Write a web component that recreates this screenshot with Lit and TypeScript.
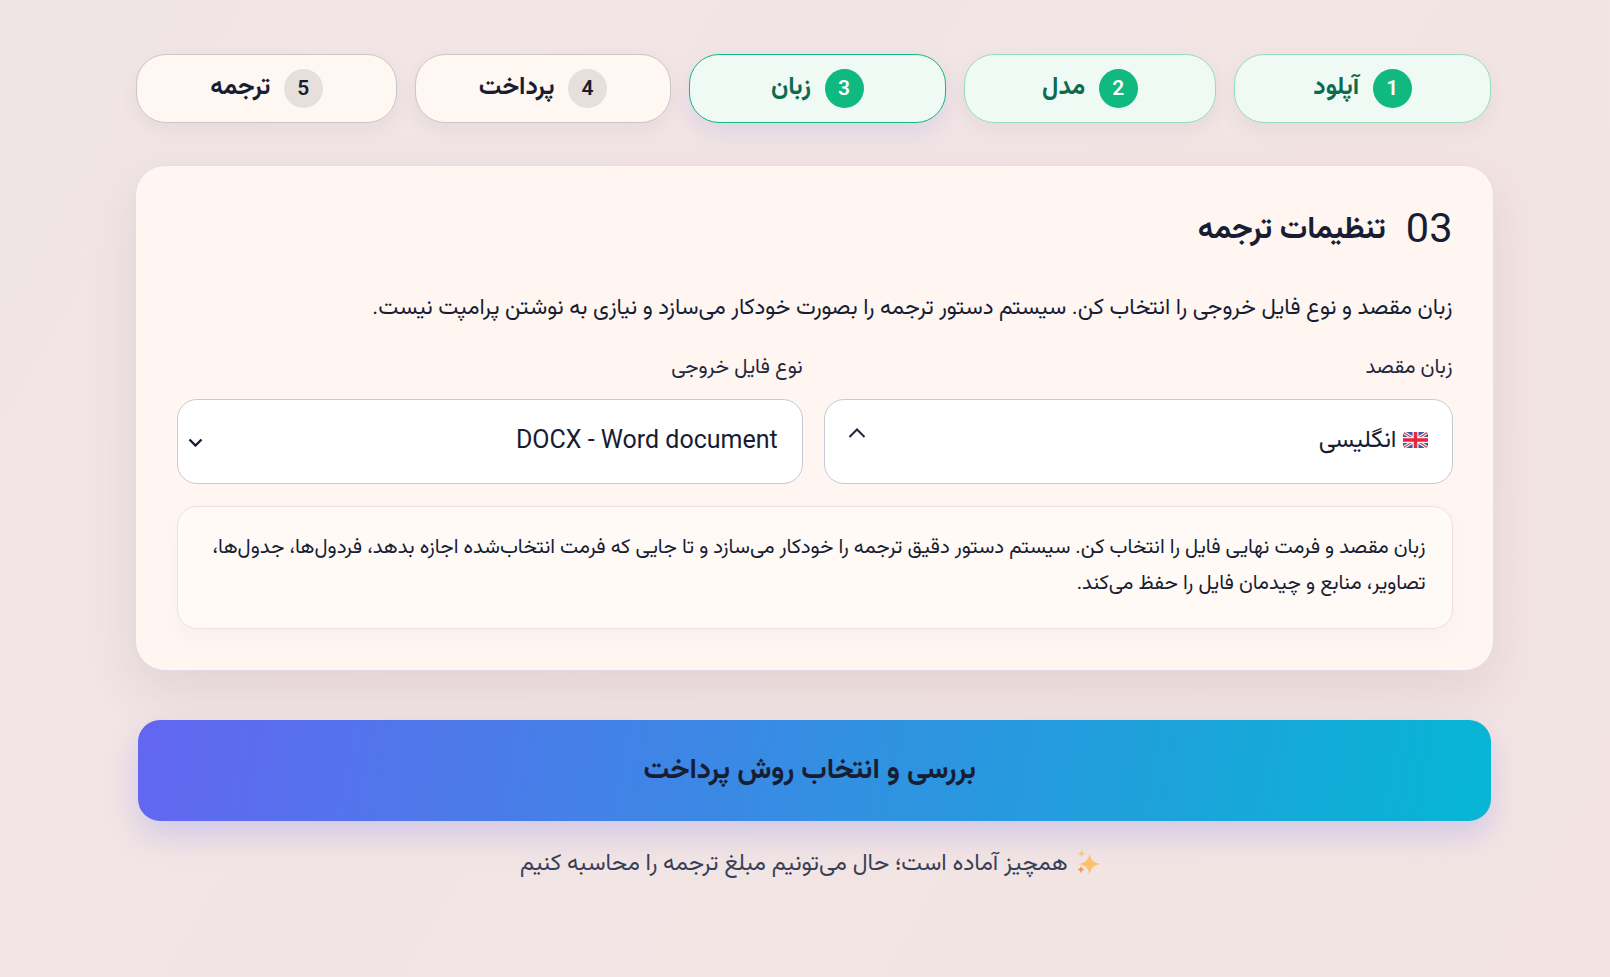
import { LitElement, html, css, svg } from "lit";
import { customElement } from "lit/decorators.js";

const steps = [
  { n: "1", label: "آپلود", state: "done" },
  { n: "2", label: "مدل", state: "done" },
  { n: "3", label: "زبان", state: "active" },
  { n: "4", label: "پرداخت", state: "todo" },
  { n: "5", label: "ترجمه", state: "todo" },
];

const flag = svg`<svg class="flag" viewBox="0 0 25 16" width="25" height="16" aria-hidden="true">
  <defs><clipPath id="fc"><rect width="25" height="16" rx="3"/></clipPath></defs>
  <g clip-path="url(#fc)">
    <rect width="25" height="16" fill="#3b5aa6"/>
    <path d="M0 0L25 16M25 0L0 16" stroke="#f3f3f6" stroke-width="3.4"/>
    <path d="M0 0L25 16M25 0L0 16" stroke="#e0394b" stroke-width="1.1"/>
    <path d="M12.5 0V16M0 8H25" stroke="#f3f3f6" stroke-width="6"/>
    <path d="M12.5 0V16M0 8H25" stroke="#e8253c" stroke-width="3.4"/>
  </g></svg>`;

const sparkle = svg`<svg class="sparkle" viewBox="0 0 25 26" width="25" height="26" aria-hidden="true">
  <path d="M13.5 4.5C14.7 11 17 13.6 25 15 17 16.4 14.7 19 13.5 26 12.3 19 10 16.4 2 15 10 13.6 12.3 11 13.5 4.5Z" fill="#fbc26a"/>
  <path d="M5.5 0.5C6 3.2 6.8 4 9.4 4.6 6.8 5.2 6 6 5.5 8.7 5 6 4.2 5.2 1.6 4.6 4.2 4 5 3.2 5.5 0.5Z" fill="#f9c86f"/>
  <path d="M5 16.5C5.5 19.2 6.3 20 8.9 20.6 6.3 21.2 5.5 22 5 24.7 4.5 22 3.7 21.2 1.1 20.6 3.7 20 4.5 19.2 5 16.5Z" fill="#f5975a"/>
</svg>`;

@customElement("app-root")
export class AppRoot extends LitElement {
  static styles = css`
    :host {
      display: block;
      box-sizing: border-box;
      width: 100%;
      min-height: 977px;
      padding: 54px 116.5px 0 135px;
      background: linear-gradient(120deg, #f0e5e5 0%, #f3e4e3 100%);
      font-family: "Roboto", "Vazirmatn", "Noto Sans Arabic", "DejaVu Sans", sans-serif;
      color: #171d33;
    }
    .page { direction: rtl; }
    .steps {
      display: grid;
      grid-template-columns: 257fr 252fr 257fr 255.5fr 261fr;
      gap: 18px;
      margin: 0 2.5px 0 1px;
    }
    .pill {
      box-sizing: border-box;
      height: 68.5px;
      display: flex;
      align-items: center;
      justify-content: center;
      gap: 13.5px;
      border-radius: 30px;
      border: 1px solid #cbc6c9;
      background: #fff7f2;
      font-size: 24.8px;
      font-weight: 700;
      box-shadow: 0 8px 18px rgba(120, 90, 100, 0.07);
    }
    .num {
      width: 39px;
      height: 39px;
      flex: none;
      border-radius: 50%;
      display: flex;
      align-items: center;
      justify-content: center;
      background: #e6dfda;
      font-size: 21px;
      font-weight: 600;
    }
    .done, .active { background: #effaf5; color: #0d6b4d; border-color: #96dcbf; }
    .active { border-color: #10b981; box-shadow: 0 10px 22px rgba(99, 102, 241, 0.12); }
    .done .num, .active .num { background: #0fb97f; color: #fff; }
    .card {
      box-sizing: border-box;
      margin-top: 42.5px;
      padding: 36px 40px 40.5px 41px;
      border: 1px solid #e6dbe6;
      border-radius: 30px;
      background: #fff6f1;
      box-shadow: 0 20px 50px rgba(120, 85, 90, 0.12);
    }
    .title { display: flex; align-items: center; gap: 20px; height: 50px; }
    .title b { font-size: 30.7px; font-weight: 700; margin-top: 6px; }
    .title span { font-size: 41.5px; font-weight: 400; }
    .desc { margin: 36px 0 27.5px; font-size: 22.5px; line-height: 36px; }
    .fields { display: grid; grid-template-columns: 628fr 625fr; gap: 21px; }
    label { display: block; font-size: 20.6px; line-height: 28px; margin-bottom: 19.5px; color: #1f2740; }
    .select {
      box-sizing: border-box;
      height: 84.5px;
      display: flex;
      align-items: center;
      justify-content: space-between;
      border: 1px solid #c3cbd6;
      border-radius: 20px;
      background: #fff;
      font-size: 25px;
    }
    .lang { padding: 0 24px 0 23px; font-size: 24.3px; }
    .type { padding: 0 24px 0 10px; }
    .value { display: flex; align-items: center; gap: 6px; }
    .flag { flex: none; margin-bottom: 2px; }
    .up { margin-bottom: 16px; }
    .down { margin-top: 2px; }
    .latin { direction: ltr; margin-bottom: 4px; }
    .note {
      box-sizing: border-box;
      height: 123px;
      margin-top: 22.5px;
      padding: 20.5px 26px 0 28px;
      border: 1px solid #f1e1da;
      border-radius: 20px;
      background: #fffaf6;
      font-size: 20.45px;
      line-height: 36px;
      box-shadow: 0 8px 20px rgba(120, 85, 90, 0.04);
    }
    .cta {
      box-sizing: border-box;
      height: 101.5px;
      margin: 49px 2.5px 0 2.5px;
      padding: 2px 9px 0 0;
      display: flex;
      align-items: center;
      justify-content: center;
      border-radius: 22px;
      background: linear-gradient(100deg, #6366f1 0%, #06b6d4 100%);
      font-size: 28.4px;
      font-weight: 700;
      box-shadow: 0 14px 30px rgba(99, 102, 241, 0.22);
    }
    .foot {
      margin-top: 23px;
      padding-right: 8px;
      display: flex;
      align-items: center;
      justify-content: center;
      gap: 8px;
      font-size: 23.25px;
      line-height: 36px;
      color: #374058;
    }
  `;

  render() {
    return html`<div class="page">
      <div class="steps">
        ${steps.map(
          (s) => html`<div class="pill ${s.state}"><span class="num">${s.n}</span><span class="lbl">${s.label}</span></div>`
        )}
      </div>
      <section class="card">
        <div class="title"><span>03</span><b>تنظیمات ترجمه</b></div>
        <p class="desc">زبان مقصد و نوع فایل خروجی را انتخاب کن. سیستم دستور ترجمه را بصورت خودکار می‌سازد و نیازی به نوشتن پرامپت نیست.</p>
        <div class="fields">
          <div>
            <label>زبان مقصد</label>
            <div class="select lang">
              <span class="value">${flag}<span>انگلیسی</span></span>
              <svg class="up" width="18" height="10" viewBox="0 0 18 10" fill="none" stroke="#1f2740" stroke-width="2"><path d="M1.5 9L9 1.5L16.5 9"/></svg>
            </div>
          </div>
          <div>
            <label>نوع فایل خروجی</label>
            <div class="select type">
              <span class="latin">DOCX - Word document</span>
              <svg class="down" width="15" height="9" viewBox="0 0 15 9" fill="none" stroke="#171d33" stroke-width="2.4"><path d="M1.5 1.5L7.5 7.5L13.5 1.5"/></svg>
            </div>
          </div>
        </div>
        <div class="note">زبان مقصد و فرمت نهایی فایل را انتخاب کن. سیستم دستور دقیق ترجمه را خودکار می‌سازد و تا جایی که فرمت انتخاب‌شده اجازه بدهد، فردول‌ها، جدول‌ها، تصاویر، منابع و چیدمان فایل را حفظ می‌کند.</div>
      </section>
      <div class="cta">بررسی و انتخاب روش پرداخت</div>
      <div class="foot">${sparkle}<span>همچیز آماده است؛ حال می‌تونیم مبلغ ترجمه را محاسبه کنیم</span></div>
    </div>`;
  }
}
